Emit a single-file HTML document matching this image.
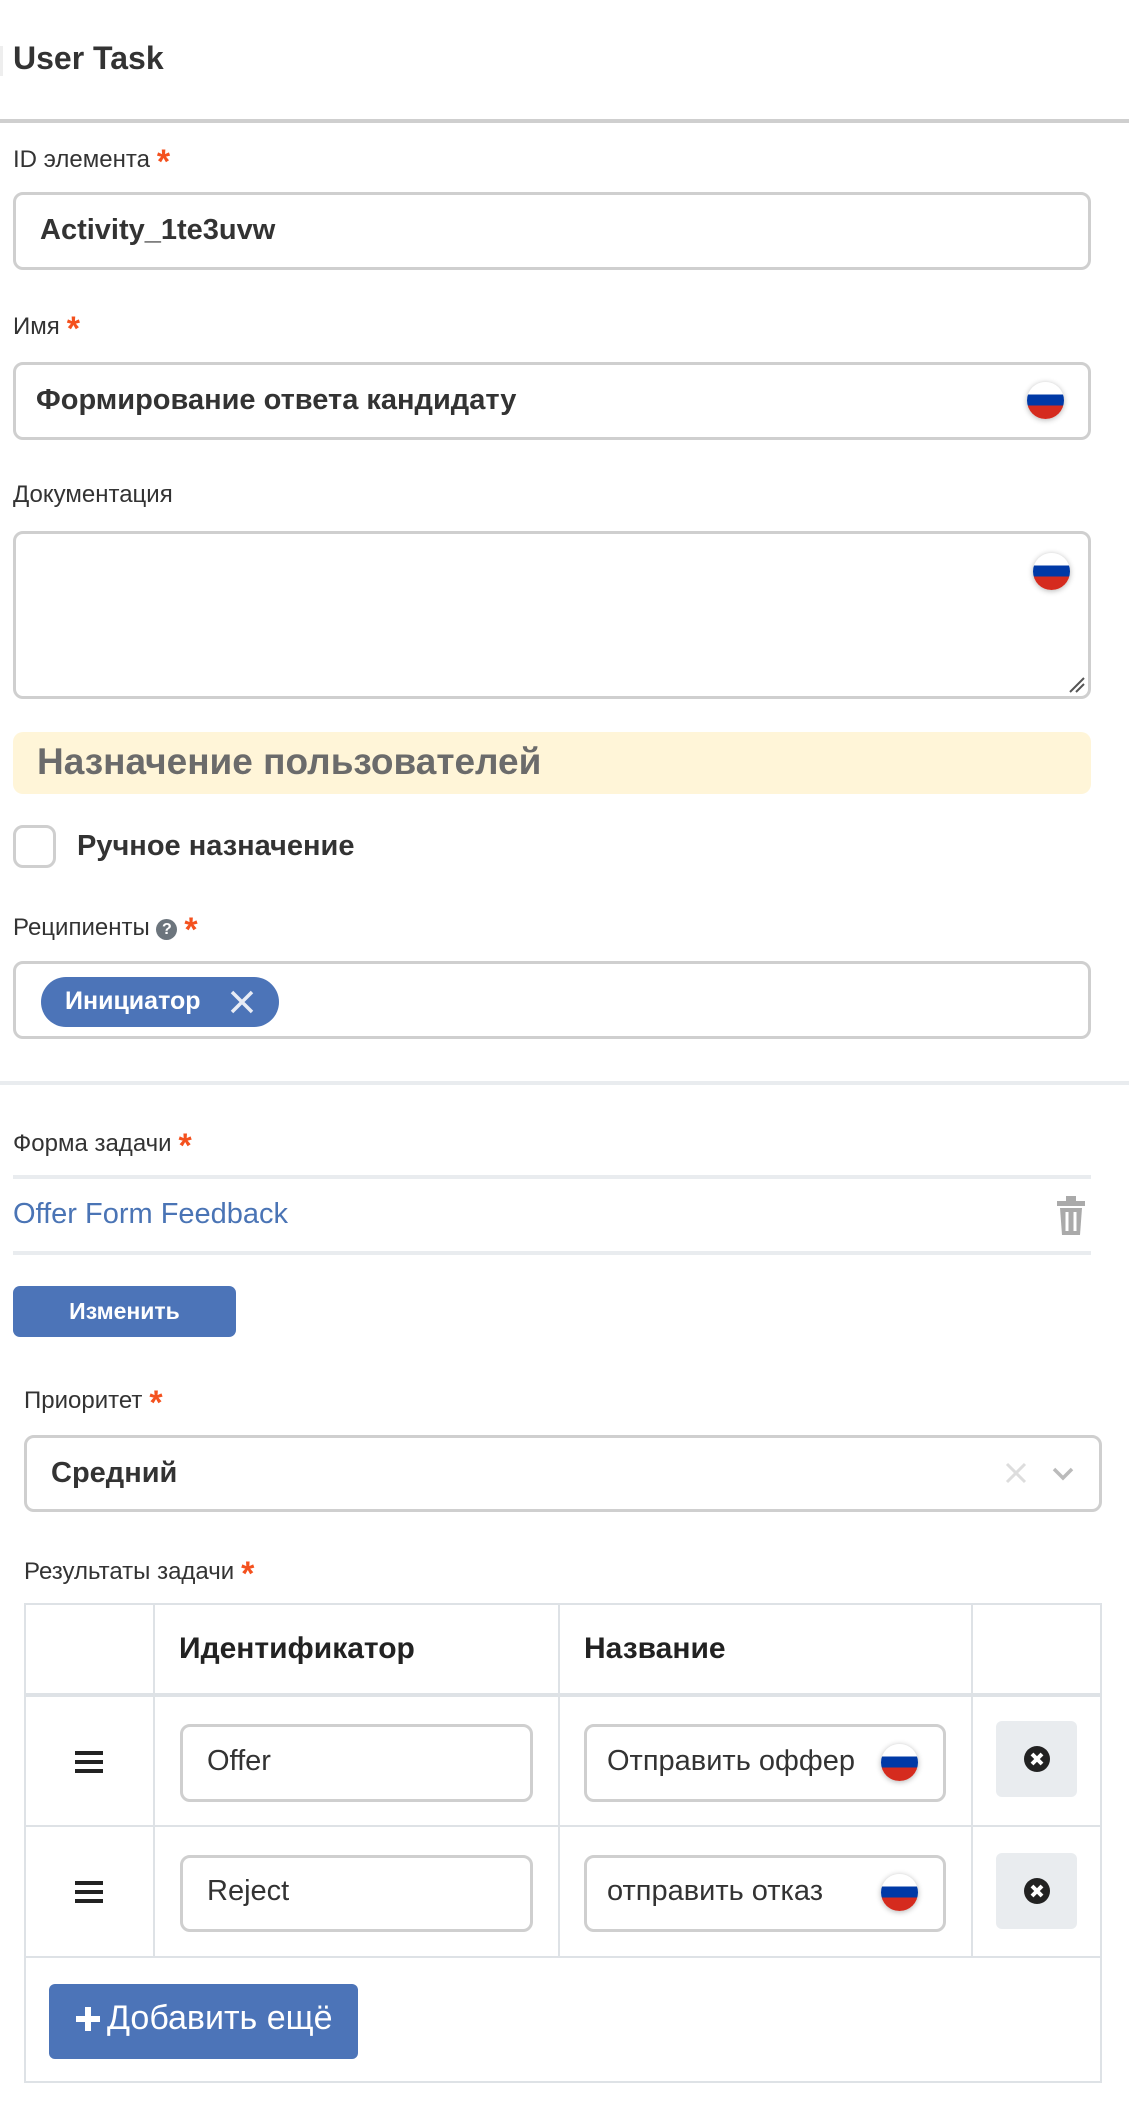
<!DOCTYPE html>
<html><head><meta charset="utf-8"><style>
*{box-sizing:border-box;margin:0;padding:0}
body{width:1129px;height:2123px;background:#fff;font-family:"Liberation Sans","Noto Sans CJK SC",sans-serif;color:#333;position:relative;overflow:hidden}
.a{position:absolute}
.lbl{position:absolute;font-size:24px;color:#333;white-space:nowrap}
.star{color:#f4511e;font-size:34px;vertical-align:-6px;margin-left:7px;font-weight:bold}
.inp{position:absolute;border:3px solid #cfcfcf;border-radius:10px;background:#fff}
.txt{position:absolute;font-size:28px;font-weight:bold;color:#333;white-space:nowrap}
.flag{position:absolute;width:37px;height:37px;border-radius:50%;overflow:hidden;box-shadow:0 1px 6px rgba(0,0,0,.3);background:linear-gradient(#fff 0 34%,#0039a6 34% 64%,#d52b1e 64%)}
.hl{position:absolute;background:#e9ecef}
</style></head><body>
<div class="a" style="left:0;top:46px;width:3px;height:30px;background:#eee"></div>
<div class="a" style="left:13px;top:40px;font-size:32px;font-weight:bold;color:#333">User Task</div>
<div class="a" style="left:0;top:119px;width:1129px;height:4px;background:#cfcfcf"></div>

<div class="lbl" style="left:13px;top:143px">ID элемента<span class="star">*</span></div>
<div class="inp" style="left:13px;top:192px;width:1078px;height:78px"></div>
<div class="txt" style="left:40px;top:214px;font-size:29px">Activity_1te3uvw</div>

<div class="lbl" style="left:13px;top:310px">Имя<span class="star">*</span></div>
<div class="inp" style="left:13px;top:362px;width:1078px;height:78px"></div>
<div class="txt" style="left:36px;top:384px;font-size:29px">Формирование ответа кандидату</div>
<div class="flag" style="left:1027px;top:382px"></div>

<div class="lbl" style="left:13px;top:481px">Документация</div>
<div class="inp" style="left:13px;top:531px;width:1078px;height:168px"></div>
<div class="flag" style="left:1033px;top:553px"></div>
<svg class="a" style="left:1066px;top:674px" width="20" height="20"><path d="M4 18L18 4M10 18L18 10" stroke="#555" stroke-width="2"/></svg>

<div class="a" style="left:13px;top:732px;width:1078px;height:62px;background:#fff5d8;border-radius:10px"></div>
<div class="a" style="left:37px;top:741px;font-size:37px;font-weight:bold;color:#6b6b6b;white-space:nowrap">Назначение пользователей</div>

<div class="a" style="left:13px;top:825px;width:43px;height:43px;border:3px solid #cfcfcf;border-radius:10px"></div>
<div class="txt" style="left:77px;top:830px;font-size:29px">Ручное назначение</div>

<div class="lbl" style="left:13px;top:911px">Реципиенты <span style="display:inline-block;width:21px;height:21px;border-radius:50%;background:#6c757d;color:#fff;font-size:16px;font-weight:bold;text-align:center;line-height:21px;vertical-align:1px">?</span><span class="star">*</span></div>
<div class="inp" style="left:13px;top:961px;width:1078px;height:78px"></div>
<div class="a" style="left:41px;top:977px;width:238px;height:50px;background:#4c74b8;border-radius:25px"></div>
<div class="a" style="left:65px;top:987px;font-size:25px;font-weight:bold;color:#fff">Инициатор</div>
<svg class="a" style="left:229px;top:989px" width="26" height="26"><path d="M3 3L23 23M23 3L3 23" stroke="#e8ecf5" stroke-width="3.5"/></svg>

<div class="a" style="left:0;top:1081px;width:1129px;height:4px;background:#e9ecef"></div>

<div class="lbl" style="left:13px;top:1127px">Форма задачи<span class="star">*</span></div>
<div class="hl" style="left:13px;top:1175px;width:1078px;height:4px"></div>
<div class="a" style="left:13px;top:1198px;font-size:29px;color:#4a74b5;white-space:nowrap">Offer Form Feedback</div>
<svg class="a" style="left:1055px;top:1195px" width="32" height="42"><rect x="2" y="6" width="28" height="5" fill="#aaa"/><rect x="11" y="1" width="10" height="6" fill="#aaa"/><path d="M5 13h22l-2 27H7z" fill="#aaa"/><path d="M12 17v19M20 17v19" stroke="#fff" stroke-width="3"/></svg>
<div class="hl" style="left:13px;top:1251px;width:1078px;height:4px"></div>

<div class="a" style="left:13px;top:1286px;width:223px;height:51px;background:#4c74b8;border-radius:7px;color:#fff;font-size:23px;font-weight:bold;text-align:center;line-height:51px">Изменить</div>

<div class="lbl" style="left:24px;top:1384px">Приоритет<span class="star">*</span></div>
<div class="inp" style="left:24px;top:1435px;width:1078px;height:77px"></div>
<div class="txt" style="left:51px;top:1457px;font-size:29px">Средний</div>
<svg class="a" style="left:1004px;top:1461px" width="80" height="26"><path d="M3 3L21 21M21 3L3 21" stroke="#ddd" stroke-width="3"/><path d="M50 8l9 9 9-9" stroke="#bbb" stroke-width="3.5" fill="none"/></svg>

<div class="lbl" style="left:24px;top:1555px">Результаты задачи<span class="star">*</span></div>

<div class="a" style="left:24px;top:1603px;width:1078px;height:480px;border:2px solid #dee2e6"></div>
<div class="a" style="left:24px;top:1693px;width:1078px;height:4px;background:#dee2e6"></div>
<div class="a" style="left:24px;top:1825px;width:1078px;height:2px;background:#dee2e6"></div>
<div class="a" style="left:24px;top:1956px;width:1078px;height:2px;background:#dee2e6"></div>
<div class="a" style="left:153px;top:1603px;width:2px;height:354px;background:#dee2e6"></div>
<div class="a" style="left:558px;top:1603px;width:2px;height:354px;background:#dee2e6"></div>
<div class="a" style="left:971px;top:1603px;width:2px;height:354px;background:#dee2e6"></div>

<div class="txt" style="left:179px;top:1632px;font-size:30px;color:#222">Идентификатор</div>
<div class="txt" style="left:584px;top:1632px;font-size:30px;color:#222">Название</div>

<svg class="a" style="left:75px;top:1750px" width="28" height="24"><path d="M0 3h28M0 12h28M0 21h28" stroke="#222" stroke-width="4"/></svg>
<div class="inp" style="left:180px;top:1724px;width:353px;height:78px"></div>
<div class="a" style="left:207px;top:1745px;font-size:29px">Offer</div>
<div class="inp" style="left:584px;top:1724px;width:362px;height:78px"></div>
<div class="a" style="left:607px;top:1745px;font-size:29px;white-space:nowrap">Отправить оффер</div>
<div class="flag" style="left:881px;top:1744px"></div>
<div class="a" style="left:996px;top:1721px;width:81px;height:76px;background:#e9ecef;border-radius:6px"></div>
<svg class="a" style="left:1023px;top:1745px" width="28" height="28"><circle cx="14" cy="14" r="13" fill="#222"/><path d="M9 9l10 10M19 9L9 19" stroke="#fff" stroke-width="4"/></svg>

<svg class="a" style="left:75px;top:1880px" width="28" height="24"><path d="M0 3h28M0 12h28M0 21h28" stroke="#222" stroke-width="4"/></svg>
<div class="inp" style="left:180px;top:1855px;width:353px;height:77px"></div>
<div class="a" style="left:207px;top:1875px;font-size:29px">Reject</div>
<div class="inp" style="left:584px;top:1855px;width:362px;height:77px"></div>
<div class="a" style="left:607px;top:1875px;font-size:29px;white-space:nowrap">отправить отказ</div>
<div class="flag" style="left:881px;top:1874px"></div>
<div class="a" style="left:996px;top:1853px;width:81px;height:76px;background:#e9ecef;border-radius:6px"></div>
<svg class="a" style="left:1023px;top:1877px" width="28" height="28"><circle cx="14" cy="14" r="13" fill="#222"/><path d="M9 9l10 10M19 9L9 19" stroke="#fff" stroke-width="4"/></svg>

<div class="a" style="left:49px;top:1984px;width:309px;height:75px;background:#4c74b8;border-radius:6px"></div>
<svg class="a" style="left:75px;top:2006px" width="26" height="26"><path d="M13 1v24M1 13h24" stroke="#fff" stroke-width="6"/></svg>
<div class="a" style="left:107px;top:1999px;font-size:34px;color:#fff;white-space:nowrap">Добавить ещё</div>
</body></html>
